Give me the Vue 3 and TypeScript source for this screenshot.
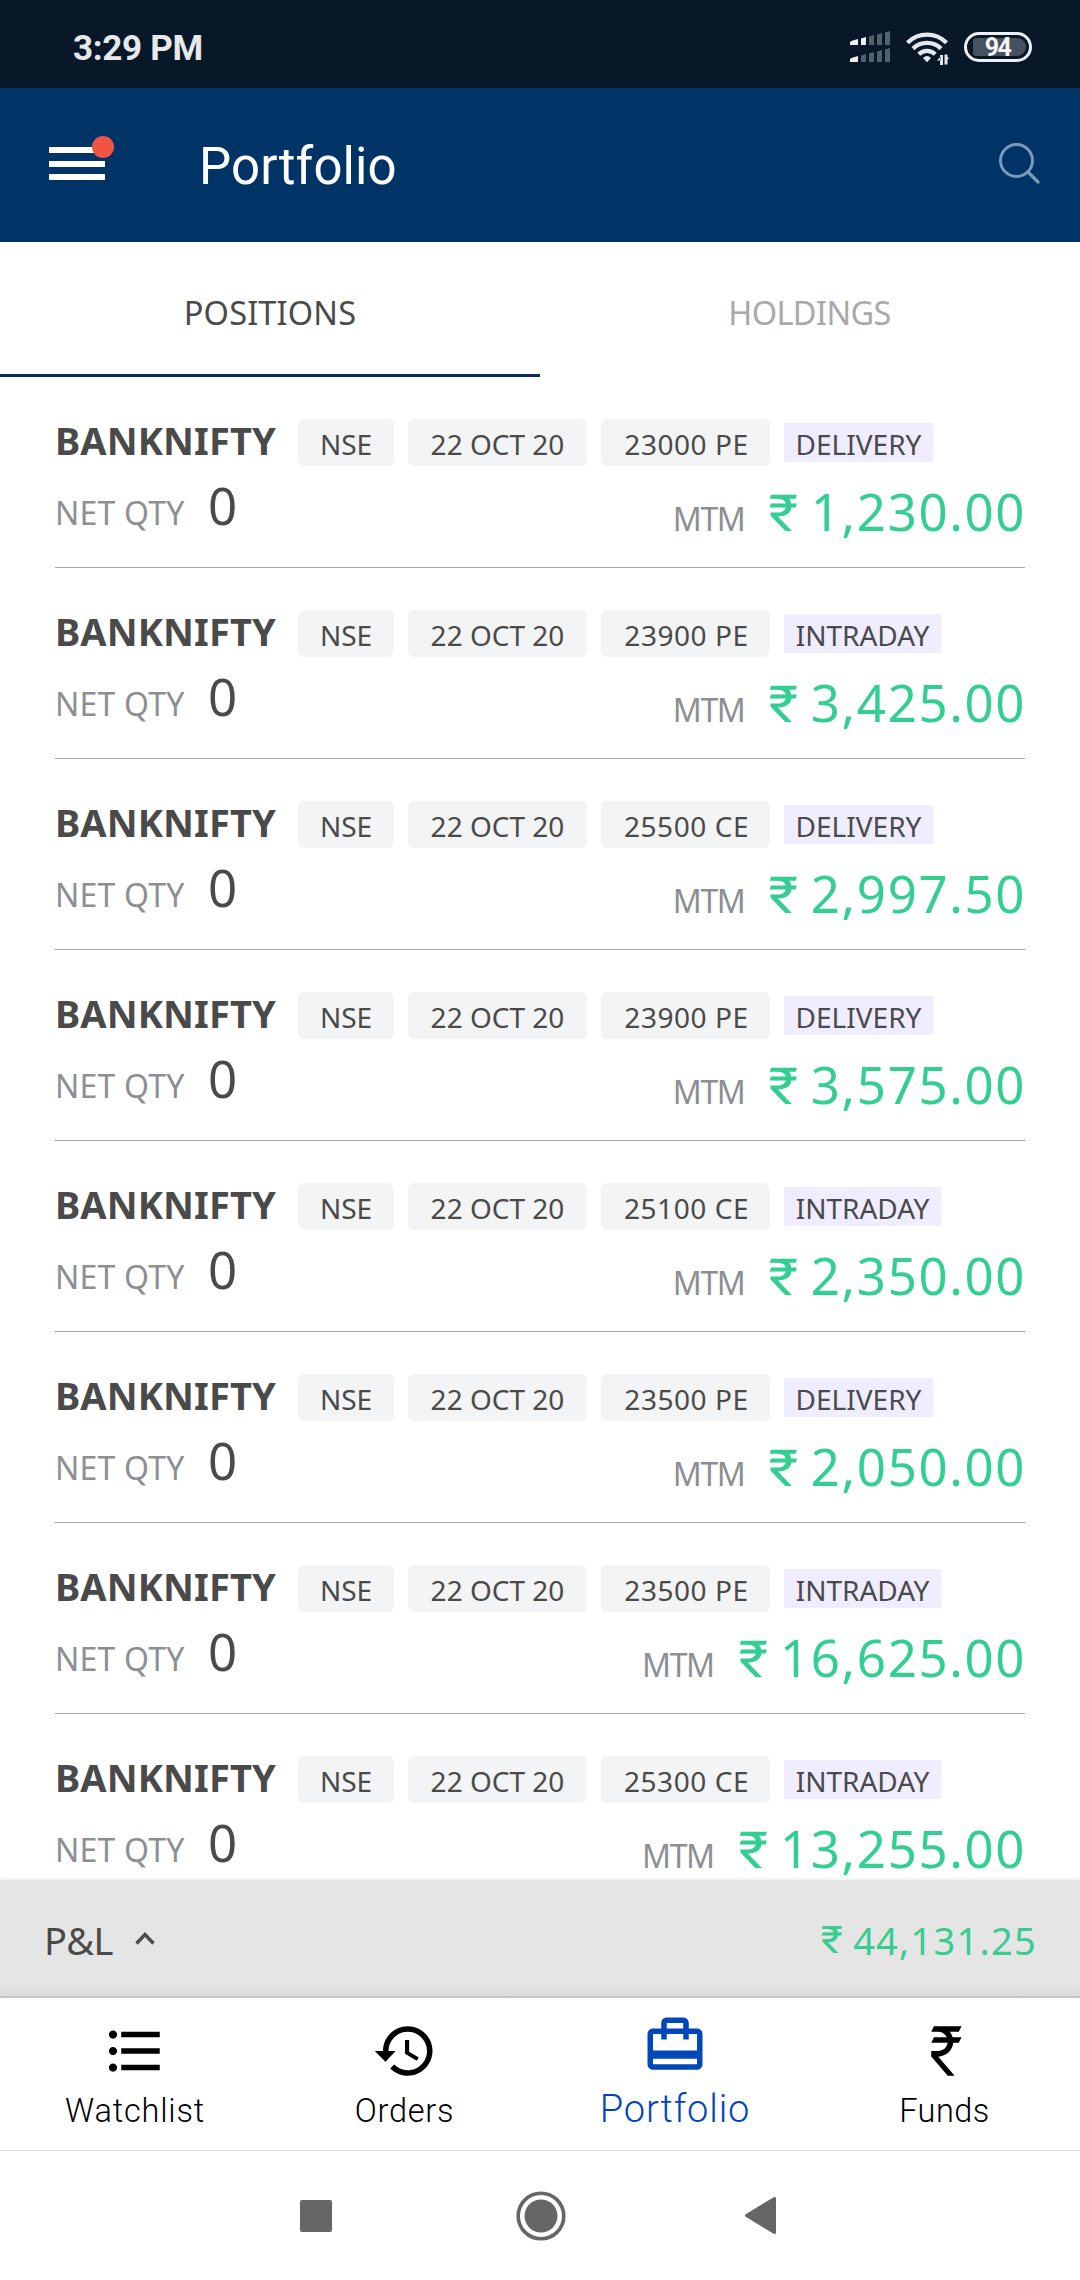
<script setup lang="ts">
interface Position {
  strike: string
  product: 'DELIVERY' | 'INTRADAY'
  mtm: string
}

interface NavItem {
  label: string
  icon: string
  active?: boolean
}

const positions: Position[] = [
  { strike: '23000 PE', product: 'DELIVERY', mtm: '1,230.00' },
  { strike: '23900 PE', product: 'INTRADAY', mtm: '3,425.00' },
  { strike: '25500 CE', product: 'DELIVERY', mtm: '2,997.50' },
  { strike: '23900 PE', product: 'DELIVERY', mtm: '3,575.00' },
  { strike: '25100 CE', product: 'INTRADAY', mtm: '2,350.00' },
  { strike: '23500 PE', product: 'DELIVERY', mtm: '2,050.00' },
  { strike: '23500 PE', product: 'INTRADAY', mtm: '16,625.00' },
  { strike: '25300 CE', product: 'INTRADAY', mtm: '13,255.00' },
]

const navItems: NavItem[] = [
  {
    label: 'Watchlist',
    icon: 'M4 10.5c-.83 0-1.5.67-1.5 1.5s.67 1.5 1.5 1.5 1.5-.67 1.5-1.5-.67-1.5-1.5-1.5zm0-6c-.83 0-1.5.67-1.5 1.5S3.17 7.5 4 7.5 5.5 6.83 5.5 6 4.83 4.5 4 4.5zm0 12c-.83 0-1.5.67-1.5 1.5s.67 1.5 1.5 1.5 1.5-.67 1.5-1.5-.67-1.5-1.5-1.5zM7 19h14v-2H7v2zm0-6h14v-2H7v2zm0-8v2h14V5H7z',
  },
  {
    label: 'Orders',
    icon: 'M13 3c-4.97 0-9 4.03-9 9H1l3.89 3.89L8.6 12H6c0-3.87 3.13-7 7-7s7 3.13 7 7-3.13 7-7 7c-1.93 0-3.68-.79-4.94-2.06l-1.42 1.42C8.27 19.99 10.51 21 13 21c4.97 0 9-4.03 9-9s-4.03-9-9-9zm-1 5v5l4.28 2.54.72-1.21-3.5-2.08V8H12z',
  },
  {
    label: 'Portfolio',
    active: true,
    icon: 'M20 6h-3V4c0-1.11-.89-2-2-2H9c-1.11 0-2 .89-2 2v2H4c-1.11 0-2 .89-2 2v11c0 1.11.89 2 2 2h16c1.11 0 2-.89 2-2V8c0-1.11-.89-2-2-2zM9 4h6v2H9V4zm11 15H4v-2h16v2zm0-5H4V8h3v2h2V8h6v2h2V8h3v6z',
  },
  {
    label: 'Funds',
    icon: 'M8 3h10l-1 2h-3.26c.48.58.84 1.26 1.05 2H18l-1 2h-2c-.25 2.57-2.26 4.63-4.8 4.96V14h-.7l6 7H13l-6-7v-2h2.5c1.76 0 3.22-1.3 3.46-3H7l1-2h4.66C12.1 5.82 10.9 5 9.5 5H7l1-2z',
  },
]
</script>

<template>
  <div class="screen">
    <div class="status-bar">
      <span class="clock">3:29 PM</span>
      <div class="status-icons">
        <svg class="signal" width="40" height="32" viewBox="0 0 40 32">
          <g fill="#eef0f2">
            <path d="M0 14v-3l2-1.200 6-1.800v6z" />
            <path d="M11 14V7.500l5-1.500v8z" />
            <path d="M0 31v-3l2-1.200 6-1.800v6z" />
          </g>
          <g fill="#53616f">
            <path d="M19 14V5.500l5-1.500v10zM27 14V3.500l5-1.500v12zM35 14V1.500L40 0v14z" />
            <path d="M11 31v-6.500l5-1.500v8zM19 31v-8.500l5-1.500v10zM27 31V20.500l5-1.500v12zM35 31V18.500l5-1.500v14z" />
          </g>
        </svg>
        <svg class="wifi" width="43" height="33" viewBox="0 0 43 33">
          <g fill="none" stroke="#e6e9ec" stroke-width="4.300">
            <path d="M1.500 10.800a27.500 27.500 0 0 1 39 0" />
            <path d="M7 16.600a20 20 0 0 1 28 0" />
            <path d="M12.800 22.200a12 12 0 0 1 16.400 0" />
          </g>
          <path fill="#e6e9ec" d="M17 26q4-3.800 8 0l-4 4.200z" />
          <path fill="#e6e9ec" d="M34 23v10h3V23zM31 28.500l3.500-4v4zM38.500 22.500v10h3v-10zM40 29.500l3.500-4H40z" />
        </svg>
        <div class="battery"><span class="battery-level">94</span></div>
      </div>
    </div>

    <header class="app-bar">
      <div class="menu">
        <i /><i /><i />
        <b class="dot" />
      </div>
      <h1>Portfolio</h1>
      <svg class="search" width="41" height="41" viewBox="0 0 41 41" fill="none" stroke="#7b99b9">
        <circle cx="17.500" cy="17.500" r="16" stroke-width="3" />
        <path d="M29 29l10 10" stroke-width="3.200" stroke-linecap="round" />
      </svg>
    </header>

    <div class="tabs">
      <div class="tab tab-active">POSITIONS</div>
      <div class="tab">HOLDINGS</div>
    </div>

    <main class="list">
      <section v-for="(p, i) in positions" :key="i" class="row">
        <div class="row-top">
          <span class="symbol">BANKNIFTY</span>
          <span class="chip chip-exchange">NSE</span>
          <span class="chip chip-expiry">22 OCT 20</span>
          <span class="chip chip-strike">{{ p.strike }}</span>
          <span class="tag" :class="p.product === 'INTRADAY' ? 'tag-intraday' : 'tag-delivery'">{{ p.product }}</span>
        </div>
        <div class="row-bottom">
          <div class="qty"><span class="label">NET QTY</span><span class="qty-value">0</span></div>
          <div class="mtm">
            <span class="label label-mtm">MTM</span>
            <span class="rupee">₹</span>
            <span class="amount">{{ p.mtm }}</span>
          </div>
        </div>
      </section>
    </main>

    <div class="pnl">
      <span class="pnl-label">P&amp;L</span>
      <svg class="chevron" width="20" height="13" viewBox="0 0 20 13" fill="none" stroke="#4a4a4a" stroke-width="3.400">
        <path d="M1.500 11.500L10 2.500l8.500 9" />
      </svg>
      <div class="pnl-value"><span class="rupee">₹</span><span>44,131.25</span></div>
    </div>

    <nav class="bottom-nav">
      <div v-for="n in navItems" :key="n.label" class="nav-item" :class="[{ active: n.active }, n.label.toLowerCase()]">
        <svg width="66" height="66" viewBox="0 0 24 24" fill="currentColor"><path :d="n.icon" /></svg>
        <span>{{ n.label }}</span>
      </div>
    </nav>

    <div class="system-nav">
      <svg width="32" height="32" viewBox="0 0 32 32"><rect width="32" height="32" rx="2" fill="#666" /></svg>
      <svg width="50" height="50" viewBox="0 0 50 50">
        <circle cx="25" cy="25" r="22.800" fill="none" stroke="#666" stroke-width="3.600" />
        <circle cx="25" cy="25" r="16.500" fill="#666" />
      </svg>
      <svg width="31" height="37" viewBox="0 0 31 37">
        <path d="M1.500 18.500L29.500 1.500v34z" fill="#666" stroke="#666" stroke-width="3" stroke-linejoin="round" />
      </svg>
    </div>
  </div>
</template>

<style>
body {
  margin: 0;
  background: #fff;
}
</style>

<style scoped>
.screen {
  display: flex;
  flex-direction: column;
  width: 1080px;
  height: 2280px;
  overflow: hidden;
  background: #fff;
  color: #4a4a4a;
  font-family: 'Noto Sans', sans-serif;
  white-space: nowrap;
}

/* status bar */
.status-bar {
  display: flex;
  flex: none;
  align-items: center;
  box-sizing: border-box;
  height: 88px;
  padding: 6px 48px 0 73px;
  background: #081829;
}
.clock {
  margin-top: 3px;
  color: #e6e8ea;
  font: 700 35px/40px Roboto, sans-serif;
  letter-spacing: -0.300px;
}
.status-icons {
  display: flex;
  align-items: center;
  margin-left: auto;
}
.wifi {
  margin: 2px 15px 0 16px;
}
.battery {
  display: flex;
  box-sizing: border-box;
  width: 68px;
  height: 30px;
  padding: 3px;
  border: 3px solid #eef0f2;
  border-radius: 15px;
}
.battery-level {
  flex: 1;
  margin-left: 3px;
  padding-right: 4px;
  border-radius: 3px 9px 9px 3px;
  background: #46525f;
  color: #f4f5f6;
  font: 700 25px/19px Roboto, sans-serif;
  letter-spacing: -1.500px;
  text-align: center;
}

/* app bar */
.app-bar {
  display: flex;
  flex: none;
  align-items: center;
  box-sizing: border-box;
  height: 154px;
  padding: 0 40px 0 49px;
  background: #003466;
}
.menu {
  position: relative;
  display: flex;
  flex-direction: column;
  gap: 7.500px;
  width: 56px;
  margin-top: -3px;
}
.menu i {
  height: 6px;
  background: #fff;
}
.dot {
  position: absolute;
  top: -11px;
  right: -9px;
  width: 22px;
  height: 22px;
  border-radius: 50%;
  background: #f05543;
}
h1 {
  margin: 4px 0 0 94px;
  color: #fff;
  font: 400 51px/60px Roboto, sans-serif;
  letter-spacing: 0.100px;
}
.search {
  margin: -3px 0 0 auto;
}

/* tabs */
.tabs {
  display: flex;
  flex: none;
  height: 135px;
}
.tab {
  flex: none;
  width: 50%;
  box-sizing: border-box;
  padding: 49px 1px 0 0;
  border-bottom: 3px solid transparent;
  color: #a9a9a9;
  font-size: 32.500px;
  line-height: 43px;
  letter-spacing: -0.600px;
  text-align: center;
}
.tab-active {
  padding-right: 0;
  border-color: #06305f;
  color: #4a4a4a;
  letter-spacing: 0.170px;
}

/* positions */
.list {
  flex: none;
  height: 1503px;
  padding: 0 55px;
  overflow: hidden;
}
.row {
  box-sizing: border-box;
  height: 191px;
  padding-top: 42px;
  border-bottom: 1px solid #a9a9a9;
}
.row-top {
  display: flex;
  align-items: baseline;
  height: 47px;
}
.symbol {
  width: 243px;
  font-size: 38px;
  font-weight: 700;
  line-height: 40px;
  letter-spacing: 0.100px;
}
.chip,
.tag {
  box-sizing: border-box;
  height: 47px;
  padding-top: 5px;
  border-radius: 6px;
  background: #f3f4f6;
  font-size: 28px;
  line-height: 40px;
  text-align: center;
}
.chip {
  margin-right: 14px;
}
.chip-exchange {
  width: 96px;
}
.chip-expiry {
  width: 179px;
}
.chip-strike {
  width: 169px;
  padding-left: 2px;
  letter-spacing: 0.550px;
}
.tag {
  height: 39px;
  border-radius: 0;
  background: #efedff;
  line-height: 32px;
}
.tag-delivery {
  width: 149px;
}
.tag-intraday {
  width: 157px;
}
.row-bottom {
  display: flex;
  justify-content: space-between;
  margin-top: 9px;
}
.qty,
.mtm {
  display: flex;
  align-items: baseline;
  line-height: 60px;
}
.mtm {
  margin-right: -1px;
  padding-top: 6px;
}
.label {
  color: #8c8f94;
  font-size: 32px;
}
.qty .label {
  width: 153px;
  letter-spacing: 0.200px;
}
.label-mtm {
  letter-spacing: -1.400px;
}
.qty-value {
  font-size: 51px;
}
.rupee {
  display: inline-block;
  font-family: Roboto, sans-serif;
  transform: scaleX(1.12);
}
.mtm .rupee {
  margin: 0 14px 0 26px;
  color: #33cf92;
  font-size: 51px;
}
.amount {
  color: #33cf92;
  font-size: 51px;
  letter-spacing: 1.600px;
}

/* profit and loss summary */
.pnl {
  display: flex;
  flex: none;
  align-items: center;
  box-sizing: border-box;
  height: 118px;
  padding: 3px 43px 0 44px;
  border-bottom: 2px solid #c8c8c8;
  background: linear-gradient(#e5e5e5 100px, #dcdcdc 116px);
  box-shadow: 0 -1px 3px rgba(0, 0, 0, 0.08);
  font-size: 38px;
  line-height: 52px;
}
.pnl-label {
  letter-spacing: -0.410px;
}
.chevron {
  margin: -3px 0 0 22px;
}
.pnl-value {
  display: flex;
  margin-left: auto;
  color: #38cc92;
  letter-spacing: 1.260px;
}
.pnl-value .rupee {
  margin-right: 10px;
}

/* bottom navigation */
.bottom-nav {
  display: flex;
  flex: none;
  box-sizing: border-box;
  height: 153px;
  border-bottom: 1px solid #e0e0e0;
}
.nav-item {
  display: flex;
  flex: 1;
  flex-direction: column;
  align-items: center;
  padding-top: 20px;
  color: #000;
  font: 350 32.500px/40px Roboto, sans-serif;
}
.nav-item span {
  margin-top: 7px;
}
.nav-item.active {
  padding-top: 14px;
  color: #0047ba;
  font-size: 38px;
  line-height: 44px;
  letter-spacing: 0.850px;
}
.nav-item.active span {
  margin-top: 9px;
}
.watchlist {
  letter-spacing: 0.800px;
}
.orders {
  letter-spacing: 0.800px;
}
.orders span,
.funds span {
  margin-right: 1px;
}
.funds {
  letter-spacing: 0.500px;
}

/* system navigation */
.system-nav {
  display: flex;
  flex: 1;
  align-items: center;
  padding-left: 300px;
}
.system-nav svg + svg {
  margin-left: 184px;
}
.system-nav svg:last-child {
  margin-left: 179px;
}
</style>
